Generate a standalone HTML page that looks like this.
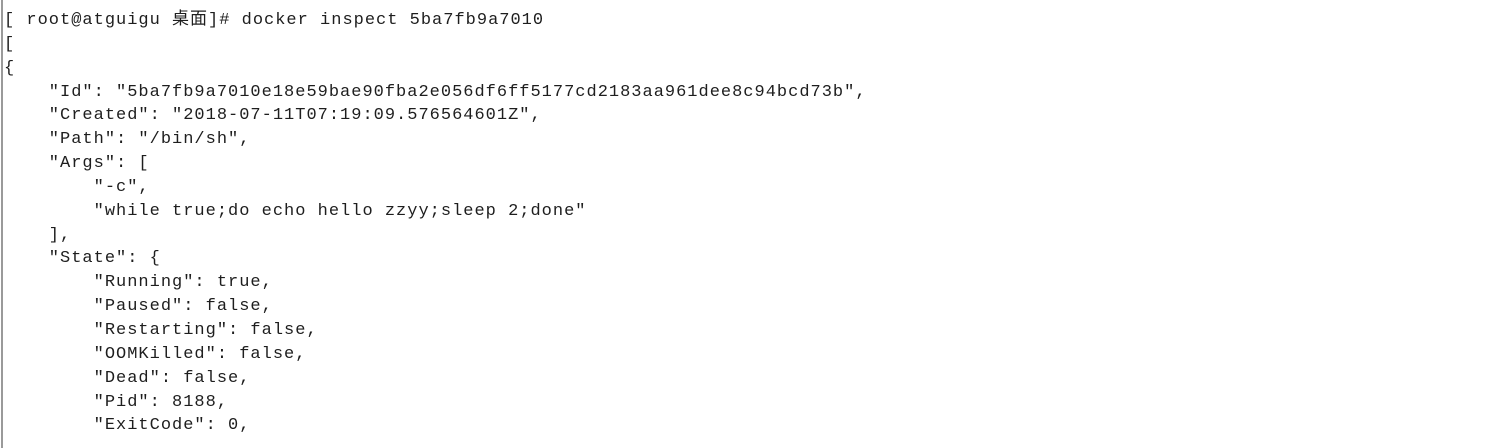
<!DOCTYPE html>
<html><head><meta charset="utf-8"><style>
html,body{margin:0;padding:0;background:#fff;width:1511px;height:448px;overflow:hidden}
.bar{position:absolute;left:1px;top:0;width:2px;height:448px;background:#9a9a9a}
pre{position:absolute;left:4px;top:9px;margin:0;font-family:"Liberation Mono","Noto Sans CJK SC",monospace;font-size:17px;letter-spacing:1px;line-height:23.85px;color:#1e1e1e;white-space:pre}
</style></head><body>
<div class="bar"></div>
<pre>[ root@atguigu 桌面]# docker inspect 5ba7fb9a7010
[
{
    "Id": "5ba7fb9a7010e18e59bae90fba2e056df6ff5177cd2183aa961dee8c94bcd73b",
    "Created": "2018-07-11T07:19:09.576564601Z",
    "Path": "/bin/sh",
    "Args": [
        "-c",
        "while true;do echo hello zzyy;sleep 2;done"
    ],
    "State": {
        "Running": true,
        "Paused": false,
        "Restarting": false,
        "OOMKilled": false,
        "Dead": false,
        "Pid": 8188,
        "ExitCode": 0,</pre>
</body></html>
